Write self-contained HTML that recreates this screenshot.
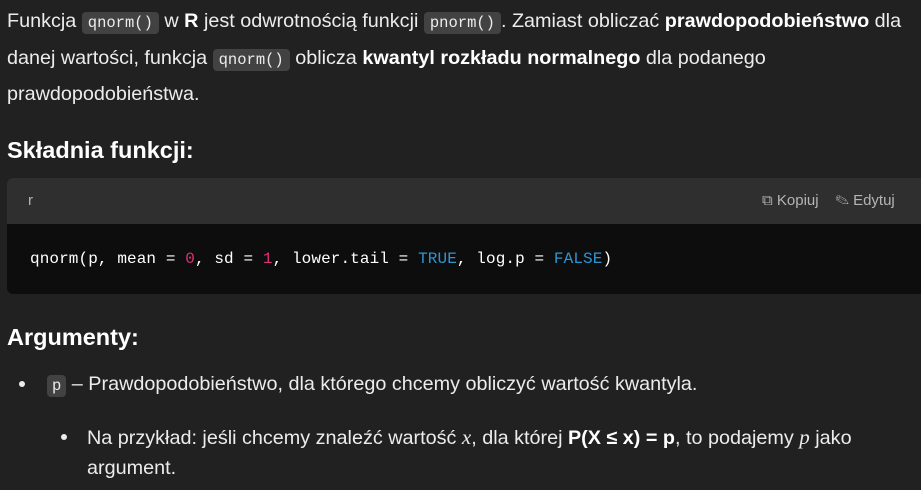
<!DOCTYPE html>
<html><head><meta charset="utf-8"><style>
body{margin:0;width:921px;height:490px;background:#212121;color:#ececec;font-family:"Liberation Sans",sans-serif;font-size:19.8px;overflow:hidden;position:relative}
.l{position:absolute;white-space:nowrap;line-height:24px}
code{font-family:"Liberation Mono",monospace;font-size:15.5px;background:#424242;border-radius:4px;padding:2px 6px;color:#ececec}
b{font-weight:bold;color:#fff}
h{position:absolute;font-weight:bold;font-size:23.5px;color:#fff;white-space:nowrap}
.blk{position:absolute;left:7px;top:178px;width:930px;height:116px;border-radius:6px;overflow:hidden;background:#0d0d0d}
.hd{height:46px;background:#2f2f2f;color:#b4b4b4;font-size:15px;position:relative}
.cd{font-family:"Liberation Mono",monospace;font-size:16px;color:#fff;position:absolute;left:23px;top:72px;white-space:nowrap;letter-spacing:0.1px}
.dot{position:absolute;width:6px;height:6px;border-radius:50%;background:#ececec}
i.m{font-family:"Liberation Serif",serif;font-size:21px}
</style></head><body>
<div class="l" style="left:7px;top:9px">Funkcja <code>qnorm()</code> w <b>R</b> jest odwrotnością funkcji <code>pnorm()</code>. Zamiast obliczać <b>prawdopodobieństwo</b> dla</div>
<div class="l" style="left:7px;top:46px">danej wartości, funkcja <code>qnorm()</code> oblicza <b>kwantyl rozkładu normalnego</b> dla podanego</div>
<div class="l" style="left:7px;top:82px">prawdopodobieństwa.</div>
<h style="left:7px;top:137px">Składnia funkcji:</h>
<div class="blk"><div class="hd"><span style="position:absolute;left:21px;top:14px">r</span><span style="position:absolute;left:755px;top:14px">⧉ Kopiuj &nbsp;&nbsp; ✎ Edytuj</span></div>
<div class="cd">qnorm(p, mean = <span style="color:#df3079">0</span>, sd = <span style="color:#df3079">1</span>, lower.tail = <span style="color:#2e95d3">TRUE</span>, log.p = <span style="color:#2e95d3">FALSE</span>)</div></div>
<h style="left:7px;top:324px">Argumenty:</h>
<div class="dot" style="left:19px;top:381px"></div>
<div class="l" style="left:47px;top:372px"><code style="padding:2px 5px">p</code> – Prawdopodobieństwo, dla którego chcemy obliczyć wartość kwantyla.</div>
<div class="dot" style="left:61px;top:434px"></div>
<div class="l" style="left:87px;top:425px">Na przykład: jeśli chcemy znaleźć wartość <i class="m">x</i>, dla której <b>P(X ≤ x) = p</b>, to podajemy <i class="m">p</i> jako</div>
<div class="l" style="left:87px;top:456px">argument.</div>
</body></html>
